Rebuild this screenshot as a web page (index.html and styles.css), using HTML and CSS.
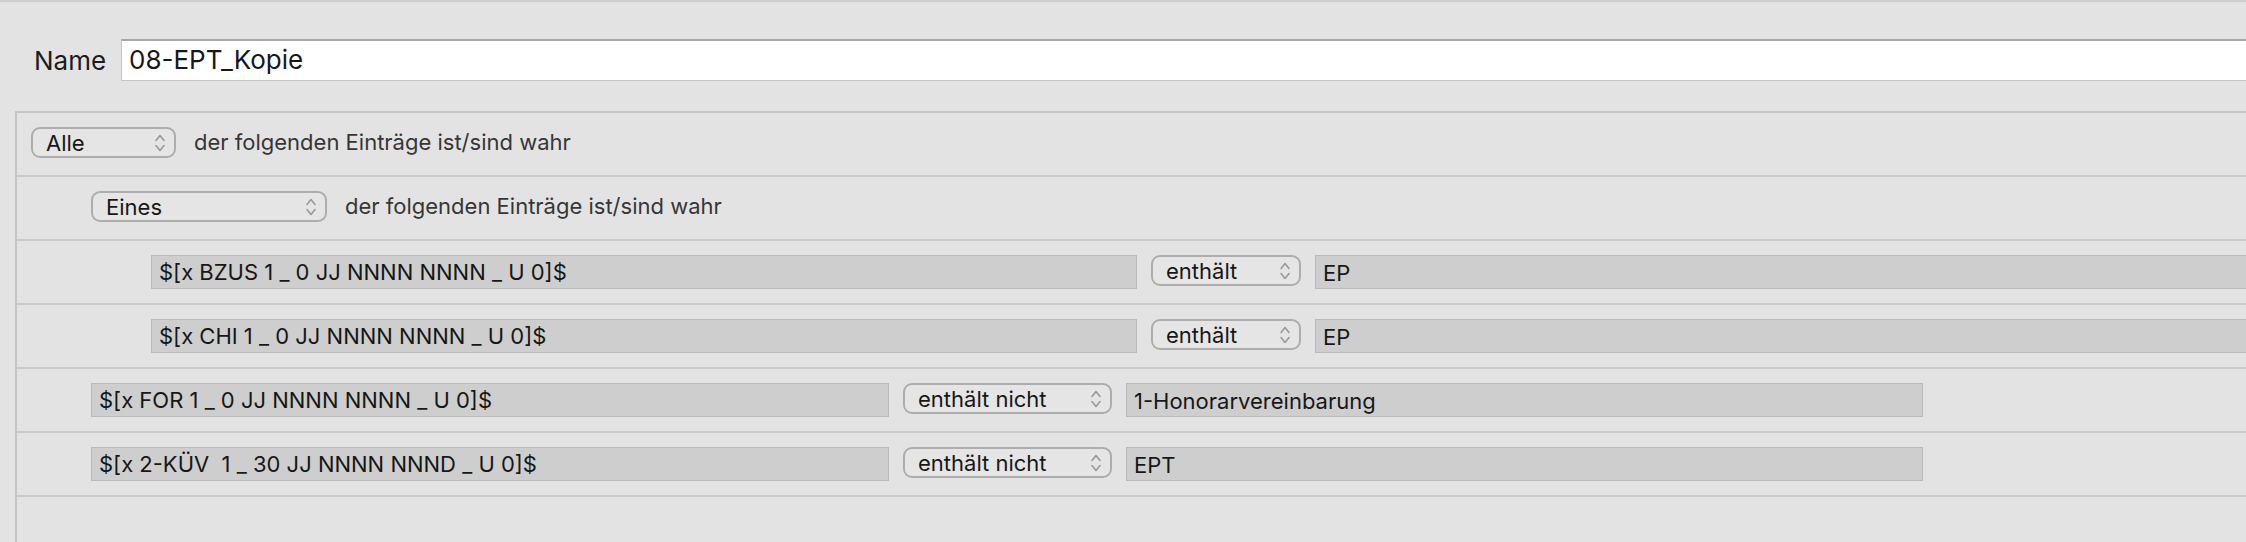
FILE: index.html
```html
<!DOCTYPE html>
<html lang="de">
<head>
<meta charset="utf-8">
<title>Regel bearbeiten</title>
<link rel="stylesheet" href="styles.css">
</head>
<body>
<div class="window">
  <div class="name-row">
    <span class="name-label">Name</span>
    <div class="name-field">08-EPT_Kopie</div>
  </div>

  <div class="rules">
    <div class="row lvl0">
      <div class="popup w-alle"><span>Alle</span><svg class="chev" viewBox="0 0 12 22" width="12" height="22"><path d="M2 8.5 L6 3.5 L10 8.5 M2 13.5 L6 18.5 L10 13.5"/></svg></div>
      <span class="caption">der folgenden Einträge ist/sind wahr</span>
    </div>
    <div class="row lvl1">
      <div class="popup w-eines"><span>Eines</span><svg class="chev" viewBox="0 0 12 22" width="12" height="22"><path d="M2 8.5 L6 3.5 L10 8.5 M2 13.5 L6 18.5 L10 13.5"/></svg></div>
      <span class="caption">der folgenden Einträge ist/sind wahr</span>
    </div>
    <div class="row lvl2">
      <div class="field w-key2">$[x BZUS 1 _ 0 JJ NNNN NNNN _ U 0]$</div>
      <div class="popup w-enth"><span>enthält</span><svg class="chev" viewBox="0 0 12 22" width="12" height="22"><path d="M2 8.5 L6 3.5 L10 8.5 M2 13.5 L6 18.5 L10 13.5"/></svg></div>
      <div class="field w-val2 val">EP</div>
    </div>
    <div class="row lvl2">
      <div class="field w-key2">$[x CHI 1 _ 0 JJ NNNN NNNN _ U 0]$</div>
      <div class="popup w-enth"><span>enthält</span><svg class="chev" viewBox="0 0 12 22" width="12" height="22"><path d="M2 8.5 L6 3.5 L10 8.5 M2 13.5 L6 18.5 L10 13.5"/></svg></div>
      <div class="field w-val2 val">EP</div>
    </div>
    <div class="row lvl1">
      <div class="field w-key1">$[x FOR 1 _ 0 JJ NNNN NNNN _ U 0]$</div>
      <div class="popup w-nicht"><span>enthält nicht</span><svg class="chev" viewBox="0 0 12 22" width="12" height="22"><path d="M2 8.5 L6 3.5 L10 8.5 M2 13.5 L6 18.5 L10 13.5"/></svg></div>
      <div class="field w-val1 val">1-Honorarvereinbarung</div>
    </div>
    <div class="row lvl1">
      <div class="field w-key1">$[x 2-KÜV&nbsp; 1 _ 30 JJ NNNN NNND _ U 0]$</div>
      <div class="popup w-nicht"><span>enthält nicht</span><svg class="chev" viewBox="0 0 12 22" width="12" height="22"><path d="M2 8.5 L6 3.5 L10 8.5 M2 13.5 L6 18.5 L10 13.5"/></svg></div>
      <div class="field w-val1 val">EPT</div>
    </div>
  </div>
</div>
</body>
</html>
```

FILE: styles.css
```css
html, body {
  margin: 0;
  padding: 0;
}

body {
  width: 2246px;
  height: 542px;
  overflow: hidden;
  background: #e3e3e3;
  font-family: "Inter", "Liberation Sans", sans-serif;
  color: #1a1a1a;
}

.window {
  border-top: 2px solid #cfcfcf;
  height: 540px;
  overflow: hidden;
}

.name-row {
  display: flex;
  align-items: center;
  margin-top: 37px;
  padding-left: 34px;
  gap: 17px;
}

.name-label {
  font-size: 26px;
  width: 70px;
  color: #1c1c1c;
}

.name-field {
  box-sizing: border-box;
  flex: 0 0 2200px;
  height: 42px;
  background: #ffffff;
  border: 1px solid #c4c4c4;
  border-top: 2px solid #a8a8a8;
  padding-left: 7px;
  font-size: 26px;
  line-height: 38px;
  color: #181818;
}

.rules {
  margin-top: 30px;
  margin-left: 15px;
  width: 2400px;
  height: 440px;
  border-top: 2px solid #c6c6c6;
  border-left: 2px solid #c6c6c6;
}

.row {
  box-sizing: border-box;
  height: 64px;
  display: flex;
  align-items: flex-start;
  padding-top: 14px;
  border-bottom: 2px solid #cbcbcb;
}

.lvl0 { padding-left: 14px; }
.lvl1 { padding-left: 74px; }
.lvl2 { padding-left: 134px; }

.popup {
  box-sizing: border-box;
  height: 31px;
  flex: none;
  display: flex;
  align-items: center;
  justify-content: space-between;
  padding-left: 13px;
  padding-right: 8px;
  border: 2px solid #adadad;
  border-radius: 9px;
  background: #e5e5e5;
  font-size: 22px;
  color: #171717;
}

.chev {
  fill: none;
  stroke: #9a9a9a;
  stroke-width: 1.6;
  stroke-linecap: round;
  stroke-linejoin: round;
}

.caption {
  margin-left: 18px;
  font-size: 22px;
  line-height: 31px;
  color: #363636;
}

.field {
  box-sizing: border-box;
  height: 34px;
  flex: none;
  background: #cecece;
  border: 1px solid #bababa;
  padding-left: 7px;
  font-size: 22px;
  line-height: 32px;
  color: #171717;
  white-space: pre;
}

.field.val {
  line-height: 35px;
}

.row .field + .popup { margin-left: 14px; }
.row .popup + .field { margin-left: 14px; }

.w-alle { width: 145px; }
.w-eines { width: 236px; }
.w-enth { width: 150px; }
.w-nicht { width: 209px; }
.w-key2 { width: 986px; }
.w-val2 { width: 986px; }
.w-key1 { width: 798px; }
.w-val1 { width: 797px; }
```
